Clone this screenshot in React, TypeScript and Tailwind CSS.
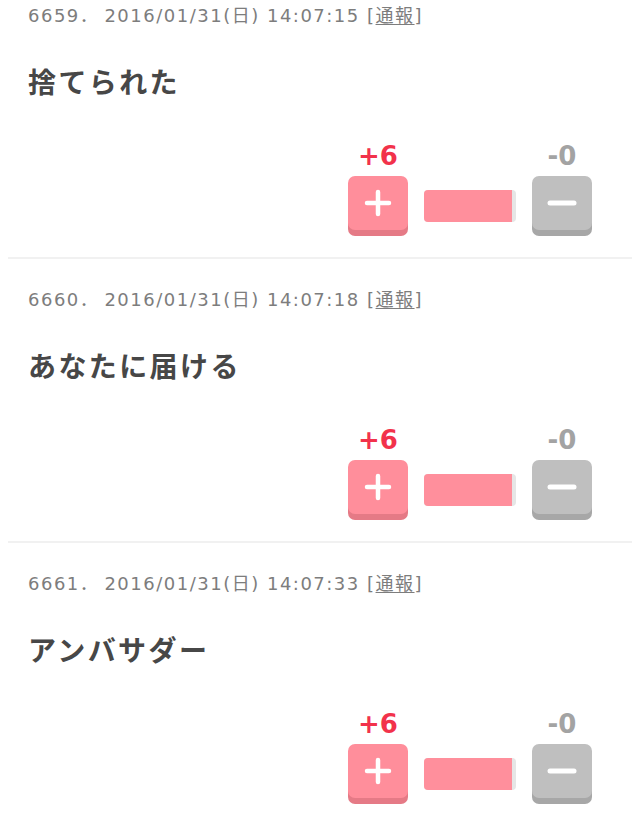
const posts = [
  { no: 6659, date: '2016/01/31(日) 14:07:15', title: '捨てられた', good: 6, bad: 0 },
  { no: 6660, date: '2016/01/31(日) 14:07:18', title: 'あなたに届ける', good: 6, bad: 0 },
  { no: 6661, date: '2016/01/31(日) 14:07:33', title: 'アンバサダー', good: 6, bad: 0 },
]

const PlusMark = () => (
  <svg width="28" height="28" viewBox="0 0 28 28" fill="none" stroke="white" strokeWidth="4.5" strokeLinecap="round">
    <path d="M3 14h22M14 3v22" />
  </svg>
)

const MinusMark = () => (
  <svg width="30" height="8" viewBox="0 0 30 8" fill="none" stroke="white" strokeWidth="5" strokeLinecap="round">
    <path d="M3 4h24" />
  </svg>
)

const Post = ({ post, first }: { post: (typeof posts)[number]; first: boolean }) => {
  const total = post.good + post.bad
  const ratio = total ? (post.good / total) * 96 : 50

  return (
    <div className={`mx-2 border-b-2 border-[#f1f1f1] pl-5 pr-10 ${first ? 'pt-[3px]' : 'pt-[28px]'} pb-[21px]`}>
      <div className="font-['DejaVu_Sans','Noto_Sans_CJK_JP',sans-serif] text-[18px] leading-[26px] tracking-[1.5px] text-[#7d7d7d]">
        {post.no}．{'\u2009'}{post.date} [<span className="underline underline-offset-2">通報</span>]
      </div>
      <h2 className="mt-[34px] font-['Noto_Sans_CJK_JP',sans-serif] text-[28px] leading-[36px] font-bold tracking-[2.4px] text-[#474747]">
        {post.title}
      </h2>

      <div className="mt-[43px] flex justify-end">
        <div className="flex items-end gap-4">
          <div className="flex flex-col items-center">
            <span className="font-['DejaVu_Sans',sans-serif] text-[26px] leading-[28px] font-bold text-[#f2324b]">
              +{post.good}
            </span>
            <button className="mt-[6px] mb-[6px] flex h-[54px] w-[60px] items-center justify-center rounded-[7px] bg-[#ff8e9b] shadow-[0_6px_0_#e57a86]">
              <PlusMark />
            </button>
          </div>

          <div className="mb-[14px] h-8 w-[92px] overflow-hidden rounded-[4px] bg-[#e6e6e6]">
            <div className="h-full bg-[#ff8f9c]" style={{ width: `${ratio}%` }} />
          </div>

          <div className="flex flex-col items-center">
            <span className="font-['DejaVu_Sans',sans-serif] text-[26px] leading-[28px] font-bold text-[#a3a3a3]">
              -{post.bad}
            </span>
            <button className="mt-[6px] mb-[6px] flex h-[54px] w-[60px] items-center justify-center rounded-[7px] bg-[#bfbfbf] shadow-[0_6px_0_#a7a7a7]">
              <MinusMark />
            </button>
          </div>
        </div>
      </div>
    </div>
  )
}

export default function App() {
  return (
    <div className="min-h-[819px] overflow-hidden bg-white">
      {posts.map((p, i) => (
        <Post key={p.no} post={p} first={i === 0} />
      ))}
    </div>
  )
}
